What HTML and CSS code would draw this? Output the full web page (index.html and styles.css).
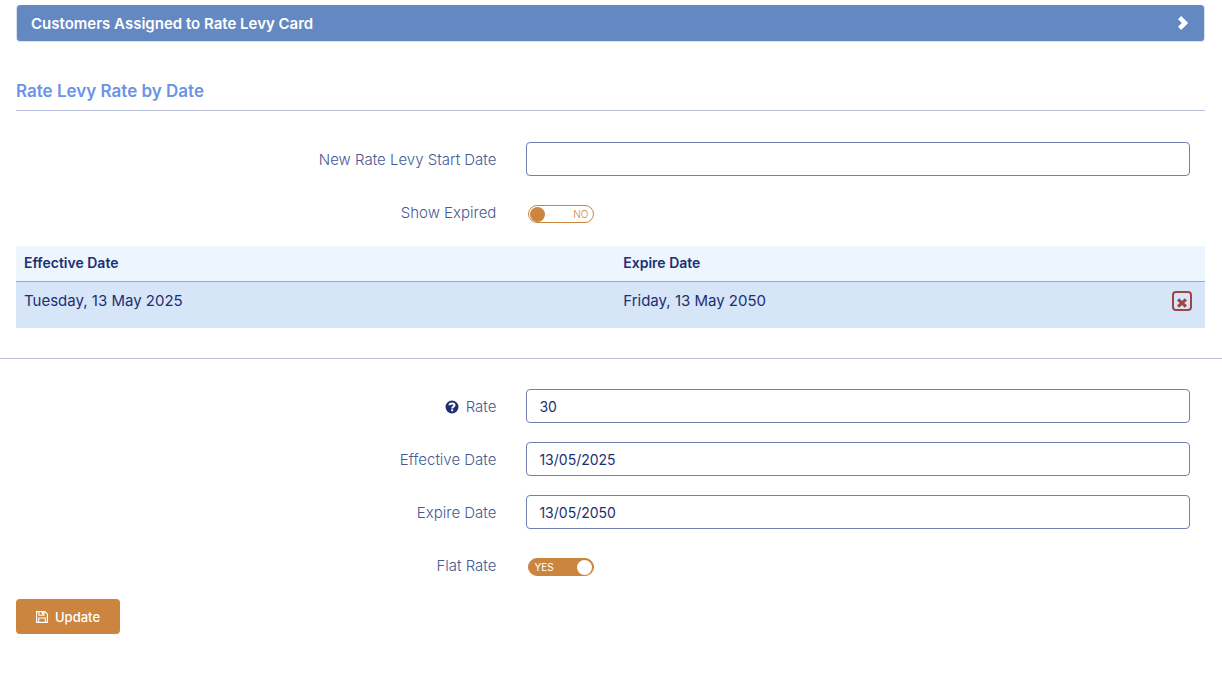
FILE: index.html
```html
<!DOCTYPE html>
<html lang="en">

<head>
    <meta charset="UTF-8">
    <meta name="viewport" content="width=device-width, initial-scale=1.0">
    <title>Rate Levy Card</title>
    <link rel="stylesheet" href="styles.css">
</head>

<body>
    <div class="section">
        <button type="button" class="panel-heading">
            Customers Assigned to Rate Levy Card
            <svg class="chevron" viewBox="0 0 12 16" aria-hidden="true">
                <path d="M1 4.200 4.200 1l7 7-7 7L1 11.800 4.800 8z" fill="#fff" />
            </svg>
        </button>

        <h2>Rate Levy Rate by Date</h2>

        <div class="form-row">
            <label for="start-date">New Rate Levy Start Date</label>
            <div class="field"><input type="text" class="text-box" id="start-date"></div>
        </div>
        <div class="form-row">
            <label for="show-expired">Show Expired</label>
            <div class="field">
                <div class="switch">
                    <input type="checkbox" id="show-expired">
                    <span class="off">NO</span>
                </div>
            </div>
        </div>

        <table>
            <thead>
                <tr>
                    <th class="date-col">Effective Date</th>
                    <th>Expire Date</th>
                    <th></th>
                </tr>
            </thead>
            <tbody>
                <tr>
                    <td>Tuesday, 13 May 2025</td>
                    <td>Friday, 13 May 2050</td>
                    <td class="action">
                        <button type="button" class="delete" aria-label="Delete">
                            <svg viewBox="0 0 10 10" aria-hidden="true">
                                <path d="M0 2.5 2.2 .3 5 2.900 7.800 .3 10 2.5 7.300 5 10 7.5 7.800 9.700 5 7.100 2.200 9.700 0 7.5 2.700 5z" fill="#9f4542" />
                            </svg>
                        </button>
                    </td>
                </tr>
            </tbody>
        </table>
    </div>

    <hr>

    <!-- selected rate -->
    <form class="section">
        <div class="form-row">
            <label for="rate">
                <svg class="help" viewBox="0 0 14 14" aria-hidden="true">
                    <circle cx="7" cy="7" r="6.5" fill="#1c2f74" />
                    <path d="M4.500 5.300C4.600 3.900 5.600 3.400 7 3.400c1.500 0 2.500.7 2.500 1.800C9.500 6.700 7.200 6.600 7.200 8.400" fill="none" stroke="#fff" stroke-width="2" />
                    <path d="M6.200 9.300h2v1.900h-2z" fill="#fff" />
                </svg>
                Rate
            </label>
            <div class="field"><input type="text" class="text-box" id="rate" value="30"></div>
        </div>
        <div class="form-row">
            <label for="effective">Effective Date</label>
            <div class="field"><input type="text" class="text-box" id="effective" value="13/05/2025"></div>
        </div>
        <div class="form-row">
            <label for="expire">Expire Date</label>
            <div class="field"><input type="text" class="text-box" id="expire" value="13/05/2050"></div>
        </div>
        <div class="form-row">
            <label for="flat-rate">Flat Rate</label>
            <div class="field">
                <div class="switch">
                    <input type="checkbox" id="flat-rate" checked>
                    <span class="on">YES</span>
                </div>
            </div>
        </div>
        <button type="button" class="update">
            <svg viewBox="0 0 12 12" aria-hidden="true">
                <path d="M.6.6h8.200l2.600 2.600v8.200H.6z" fill="none" stroke="#fff" stroke-width="1.200" />
                <path d="M3 .6v3.600h5V.6M2.700 11.400V7h6.600v4.400" fill="none" stroke="#fff" stroke-width="1.100" />
                <path d="M5.800 1h1.700v2.700H5.800z" fill="#fff" />
            </svg>
            Update
        </button>
    </form>
</body>

</html>
```
FILE: styles.css
```css
* {
    box-sizing: border-box;
}

body {
    margin: 0;
    padding: 5px 0 32px;
    background-color: #fff;
    color: #1c2f74;
    font-family: Inter, "Liberation Sans", sans-serif;
    font-size: 15px;
    line-height: 20px;
}

button,
input {
    font-family: inherit;
}

.section {
    padding: 0 17px 0 16px;
}

.panel-heading {
    display: flex;
    justify-content: space-between;
    align-items: center;
    width: 100%;
    height: 37px;
    padding: 0 15px 0 14px;
    border: 1px solid #dce1ec;
    border-top: 0;
    border-radius: 4px;
    background-color: #6488c2;
    color: #fff;
    font-size: 15px;
    font-weight: 600;
}

.chevron {
    width: 12px;
    height: 16px;
}

h2 {
    margin: 39px 0 31px;
    padding-bottom: 9px;
    border-bottom: 1px solid #b7bfd8;
    color: #6b93e6;
    font-size: 17px;
    font-weight: 600;
    line-height: 20px;
}

.form-row {
    display: flex;
    min-height: 34px;
    margin-bottom: 19px;
}

.form-row label {
    width: 41.6667%;
    padding: 8px 15px 0;
    color: #455a94;
    font-weight: 300;
    text-align: right;
}

.field {
    flex: 1;
    padding: 0 15px;
}

.text-box {
    display: block;
    width: 100%;
    height: 34px;
    padding: 0 12px;
    border: 1px solid #7480b0;
    border-radius: 4px;
    background-color: #fff;
    color: #1c2f74;
    font-size: 14px;
}

.help {
    width: 14px;
    height: 14px;
    margin-right: 2px;
    vertical-align: -2px;
}

/* yes/no switch */
.switch {
    display: grid;
    align-items: center;
    width: 66px;
    margin: 10px 0 0 2px;
    font-size: 10px;
    line-height: 18px;
}

.switch input,
.switch span {
    grid-area: 1 / 1;
}

.switch input {
    display: flex;
    align-items: center;
    appearance: none;
    width: 66px;
    height: 18px;
    margin: 0;
    padding: 0 1px;
    border: 1px solid #cb853f;
    border-radius: 9px;
    background-color: #fff;
}

.switch input::before {
    content: "";
    width: 15px;
    height: 15px;
    border-radius: 50%;
    background-color: #cb853f;
}

.switch input:checked {
    justify-content: flex-end;
    background-color: #cb853f;
}

.switch input:checked::before {
    background-color: #fff;
}

.switch span {
    padding: 0 6px;
    pointer-events: none;
}

.off {
    color: #cb853f;
    font-weight: 300;
    text-align: right;
}

.on {
    color: #fff;
}

table {
    width: 100%;
    margin-top: -2px;
    border-collapse: collapse;
    background-color: #d7e5f8;
}

th,
td {
    padding: 9px 8px;
    text-align: left;
    vertical-align: top;
}

th {
    height: 35px;
    padding: 7px 8px;
    border-bottom: 1px solid #93a8d2;
    background-color: #edf6ff;
    font-size: 14px;
    font-weight: 600;
}

td {
    height: 47px;
}

.date-col {
    width: 50.4%;
}

td.action {
    padding: 9px 13px;
    text-align: right;
}

.delete {
    display: inline-flex;
    justify-content: center;
    align-items: flex-end;
    width: 20px;
    height: 20px;
    padding: 0 0 1px;
    border: 2px solid #9f4542;
    border-radius: 4px;
    background-color: transparent;
}

.delete svg {
    width: 10px;
    height: 10px;
}

hr {
    height: 1px;
    margin: 30px 0;
    border: 0;
    background-color: #b7bfd8;
}

.update {
    display: flex;
    align-items: center;
    gap: 7px;
    height: 35px;
    margin-top: -2px;
    padding: 0 20px;
    border: 0;
    border-radius: 4px;
    background-color: #cb853f;
    color: #fff;
    font-size: 13px;
    font-weight: 500;
}

.update svg {
    width: 12px;
    height: 12px;
}
```
